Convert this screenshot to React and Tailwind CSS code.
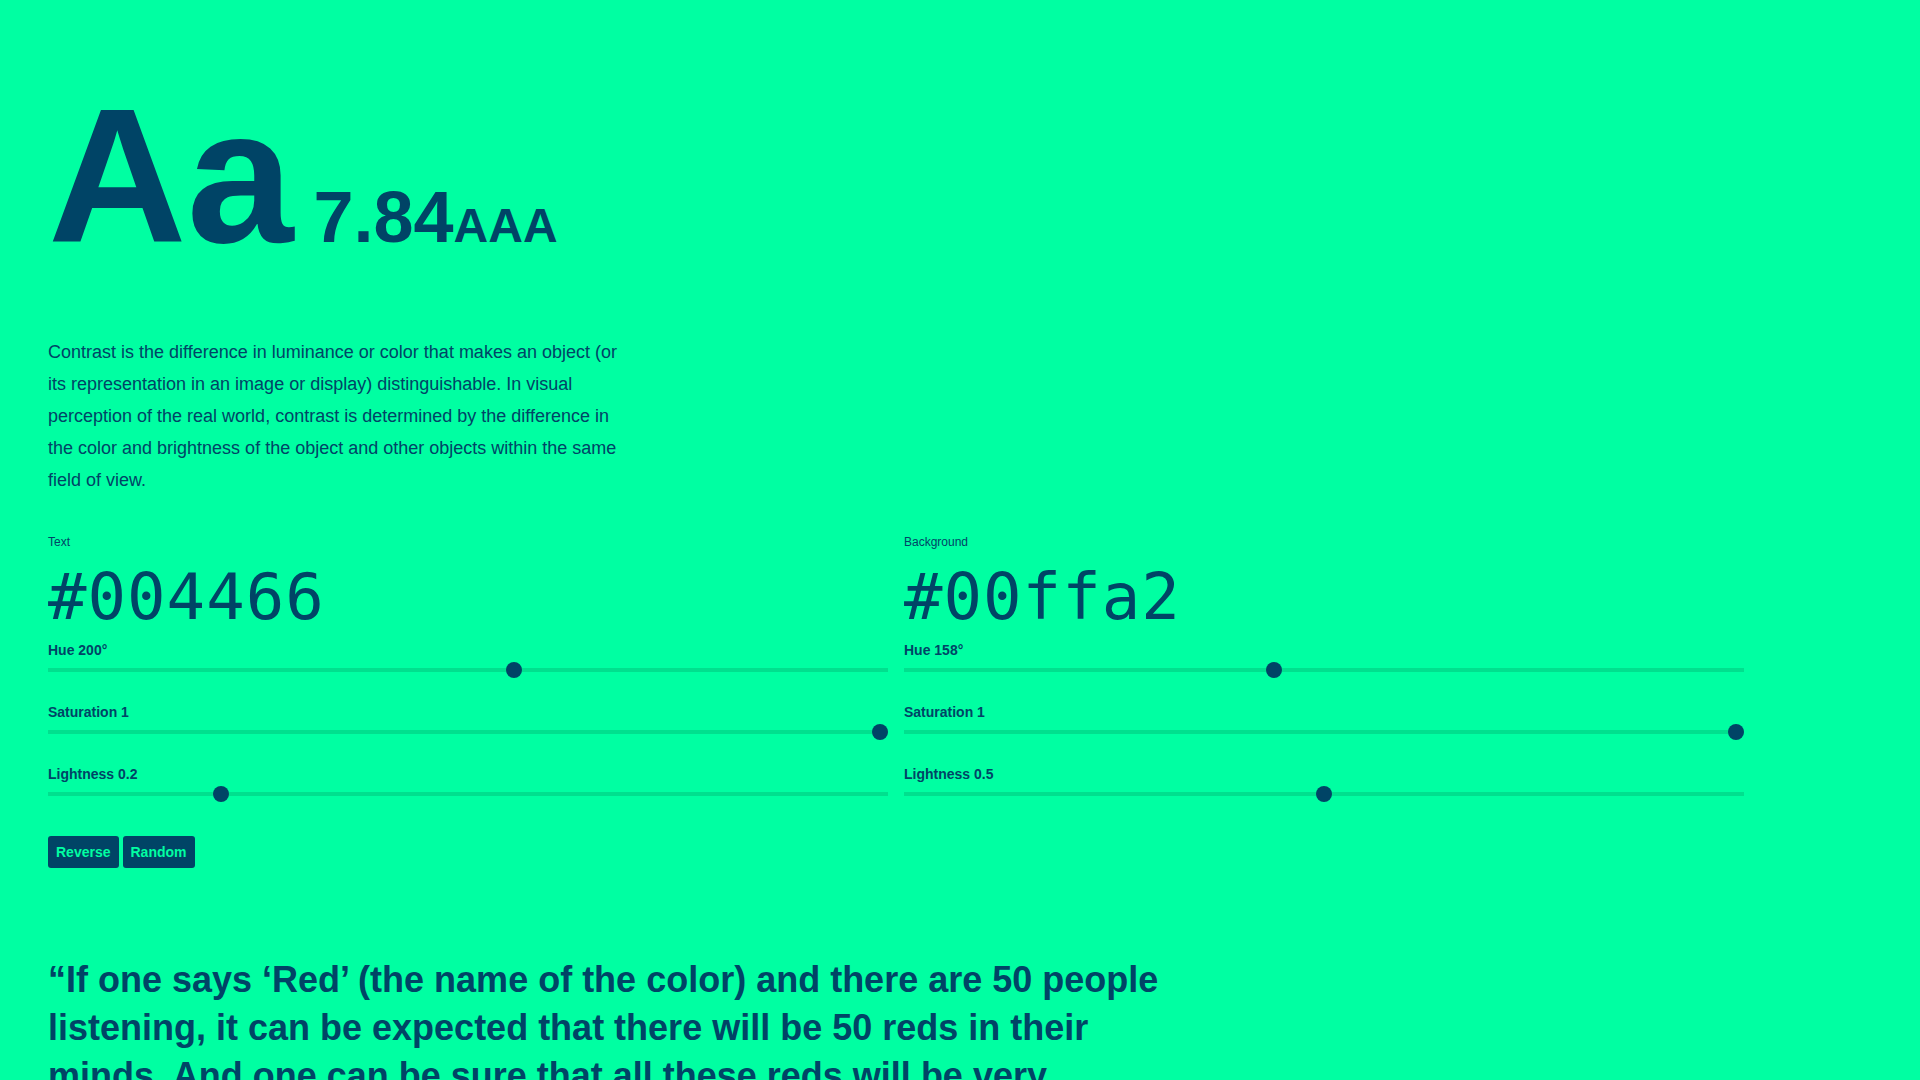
import { useMemo, useState } from 'react'

// hsl (h in degrees, s and l in 0..1) -> #rrggbb
function hslToHex(h, s, l) {
  const c = (1 - Math.abs(2 * l - 1)) * s
  const x = c * (1 - Math.abs(((h / 60) % 2) - 1))
  const m = l - c / 2
  let rgb = [0, 0, 0]
  if (h < 60) rgb = [c, x, 0]
  else if (h < 120) rgb = [x, c, 0]
  else if (h < 180) rgb = [0, c, x]
  else if (h < 240) rgb = [0, x, c]
  else if (h < 300) rgb = [x, 0, c]
  else rgb = [c, 0, x]
  return '#' + rgb.map((v) => Math.round((v + m) * 255).toString(16).padStart(2, '0')).join('')
}

function luminance(hex) {
  const [r, g, b] = [1, 3, 5].map((i) => {
    const v = parseInt(hex.slice(i, i + 2), 16) / 255
    return v <= 0.03928 ? v / 12.92 : Math.pow((v + 0.055) / 1.055, 2.4)
  })
  return 0.2126 * r + 0.7152 * g + 0.0722 * b
}

function rating(ratio) {
  if (ratio >= 7) return 'AAA'
  if (ratio >= 4.5) return 'AA'
  if (ratio >= 3) return 'AA Large'
  return 'Fail'
}

export default function App() {
  const [text, setText] = useState({ h: 200, s: 1, l: 0.2 })
  const [back, setBack] = useState({ h: 158, s: 1, l: 0.5 })

  const fg = hslToHex(text.h, text.s, text.l)
  const bg = hslToHex(back.h, back.s, back.l)

  const ratio = useMemo(() => {
    const a = luminance(fg)
    const b = luminance(bg)
    return (Math.max(a, b) + 0.05) / (Math.min(a, b) + 0.05)
  }, [fg, bg])

  const randomize = () => {
    const pick = () => ({
      h: Math.floor(Math.random() * 360),
      s: Math.round(Math.random() * 100) / 100,
      l: Math.round(Math.random() * 100) / 100,
    })
    setText(pick())
    setBack(pick())
  }

  return (
    <div
      style={{ '--fg': fg, '--bg': bg }}
      className="min-h-screen bg-(--bg) text-(--fg) font-['Liberation_Sans',Arial,sans-serif] px-12 pt-[80px] pb-[175px]"
    >
      <div className="flex items-baseline font-bold leading-none">
        <span className="text-[192px]">Aa</span>
        <span className="ml-5 text-[72px]">{ratio.toFixed(2)}</span>
        <span className="text-[48px]">{rating(ratio)}</span>
      </div>

      <p className="mt-16 max-w-[576px] text-[18px] leading-8">
        Contrast is the difference in luminance or color that makes an object (or its representation in an
        image or display) distinguishable. In visual perception of the real world, contrast is determined by
        the difference in the color and brightness of the object and other objects within the same field of
        view.
      </p>

      <div className="mt-[38px] grid w-[1696px] grid-cols-2 gap-4">
        <ColorControls label="Text" hex={fg} value={text} onChange={setText} />
        <ColorControls label="Background" hex={bg} value={back} onChange={setBack} />
      </div>

      <div className="mt-[34px] flex gap-1">
        <button
          onClick={() => { setText(back); setBack(text) }}
          className="h-8 rounded-[3px] bg-(--fg) px-2 text-sm font-bold text-(--bg)"
        >
          Reverse
        </button>
        <button
          onClick={randomize}
          className="h-8 rounded-[3px] bg-(--fg) px-2 text-sm font-bold text-(--bg)"
        >
          Random
        </button>
      </div>

      <blockquote className="mt-[88px] max-w-6xl text-4xl font-bold leading-[48px]">
        “If one says ‘Red’ (the name of the color) and there are 50 people listening, it can be expected that
        there will be 50 reds in their minds. And one can be sure that all these reds will be very different.”
      </blockquote>
      <p className="mt-6 text-lg leading-8">— Josef Albers, Interaction of Color</p>
    </div>
  )
}

function ColorControls({ label, hex, value, onChange }) {
  const set = (key) => (e) => onChange({ ...value, [key]: Number(e.target.value) })
  return (
    <div>
      <div className="text-xs leading-4">{label}</div>
      <div className="mt-[15px] font-['DejaVu_Sans_Mono',monospace] text-[64px] leading-none tracking-[1px]">{hex}</div>
      <div className="mt-[11px]">
        <Slider label={`Hue ${value.h}°`} min={0} max={360} step={1} value={value.h} onChange={set('h')} />
        <Slider label={`Saturation ${value.s}`} min={0} max={1} step={0.01} value={value.s} onChange={set('s')} />
        <Slider label={`Lightness ${value.l}`} min={0} max={1} step={0.01} value={value.l} onChange={set('l')} />
      </div>
    </div>
  )
}

function Slider({ label, ...props }) {
  return (
    <div className="mb-6 last:mb-0">
      <div className="text-sm font-bold leading-5">{label}</div>
      <div className="mt-0.5 flex h-4 items-center">
        <input
          type="range"
          {...props}
          className="h-1 w-full cursor-pointer appearance-none bg-black/[0.12] outline-none [&::-webkit-slider-thumb]:h-4 [&::-webkit-slider-thumb]:w-4 [&::-webkit-slider-thumb]:appearance-none [&::-webkit-slider-thumb]:rounded-full [&::-webkit-slider-thumb]:bg-(--fg) [&::-moz-range-thumb]:h-4 [&::-moz-range-thumb]:w-4 [&::-moz-range-thumb]:rounded-full [&::-moz-range-thumb]:border-0 [&::-moz-range-thumb]:bg-(--fg)"
        />
      </div>
    </div>
  )
}
